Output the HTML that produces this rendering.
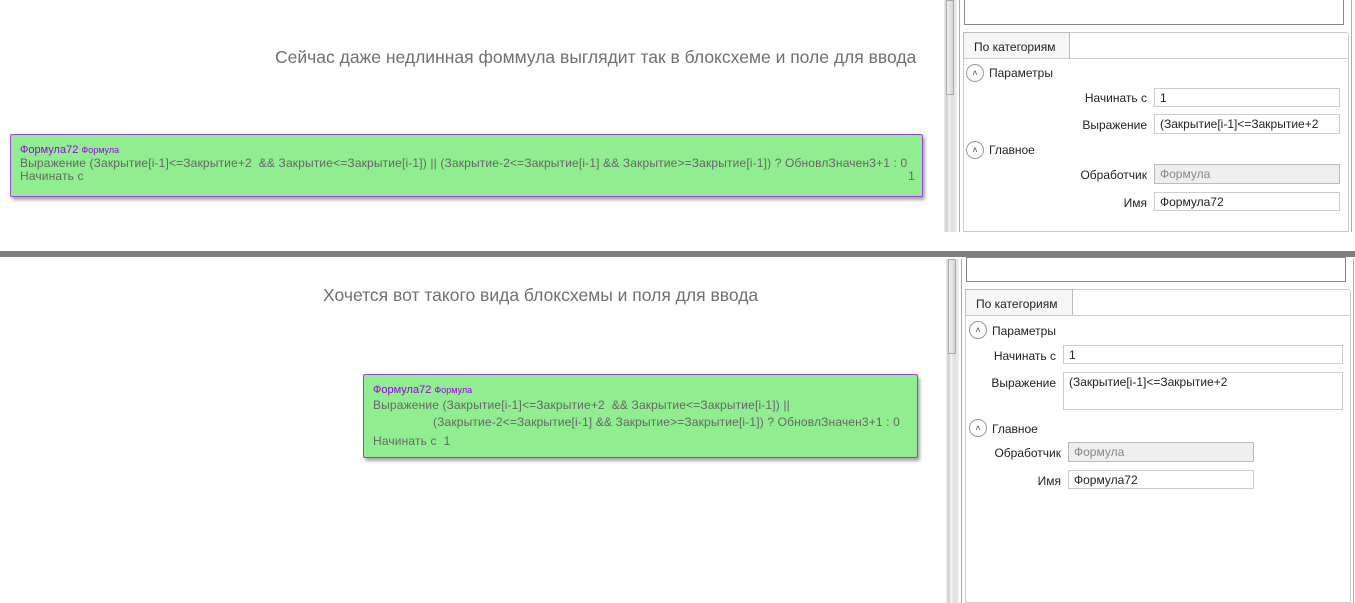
<!DOCTYPE html>
<html><head><meta charset="utf-8"><style>
*{margin:0;padding:0;box-sizing:border-box}
body{width:1355px;height:603px;background:#fff;position:relative;overflow:hidden;font-family:"Liberation Sans","DejaVu Sans",sans-serif;color:#333}
.a{position:absolute}
.h{font-size:17.5px;color:#707070;white-space:nowrap;transform-origin:left top}
.box{background:#90ee90;border:1px solid #a040e0;box-shadow:2px 3px 3px rgba(0,0,0,.35);font-size:12px;letter-spacing:0.15px;color:#666;border-radius:2px;white-space:nowrap}
.t{color:#9a00e8;font-size:11px;letter-spacing:0}
.t small{font-size:9px}
.sb{background:linear-gradient(90deg,#eee,#ccc 20%,#f4f4f4 40%,#ddd 60%,#eee)}
.sbt{border:1px solid #aaa;background:linear-gradient(90deg,#f0f0f0,#d4d4d4)}
.panel{border-left:1px solid #aaa;border-right:1px solid #aaa;background:#fff}
.lb{border:1px solid #888;background:#fff}
.tab{border:1px solid #bbb;border-bottom:none;background:#f6f6f6;font-size:12px;color:#222;padding:7px 0 0 10px}
.cont{border:1px solid #ccc;border-radius:3px 3px 0 0}
.sec{font-size:12px;color:#222}
.ic{width:18px;height:18px;border:1px solid #999;border-radius:50%;background:#fff;font-size:9px;text-align:center;line-height:16px;color:#444}
.lab{font-size:12px;color:#222;text-align:right}
.in{border:1px solid #ccc;background:#fff;font-size:12px;color:#222;padding:2px 0 0 5px;white-space:nowrap;overflow:hidden}
.dis{background:#eee;color:#888;border-color:#bbb}
</style></head><body>

<div class="a h" style="left:275px;top:47px">Сейчас даже недлинная фоммула выглядит так в блоксхеме и поле для ввода</div>

<div class="a box" style="left:10px;top:134px;width:913px;height:63px;padding:9px 0 0 9px;line-height:13px">
<div class="t">Формула72 <small>Формула</small></div>
<div>Выражение (Закрытие[i-1]&lt;=Закрытие+2 &nbsp;&amp;&amp; Закрытие&lt;=Закрытие[i-1]) || (Закрытие-2&lt;=Закрытие[i-1] &amp;&amp; Закрытие&gt;=Закрытие[i-1]) ? ОбновлЗначен3+1 : 0</div>
<div>Начинать с<span style="position:absolute;right:7px">1</span></div>
</div>

<!-- top panel -->
<div class="a sb" style="left:944px;top:0;width:13px;height:232px"></div>
<div class="a sbt" style="left:946px;top:0;width:8px;height:95px"></div>
<div class="a panel" style="left:959px;top:0;width:393px;height:232px"></div>
<div class="a lb" style="left:964px;top:-2px;width:380px;height:27px"></div>
<div class="a cont" style="left:963px;top:32px;width:386px;height:200px"></div>
<div class="a tab" style="left:963px;top:32px;width:107px;height:26px">По категориям</div>
<div class="a" style="left:963px;top:58px;width:386px;height:1px;background:#ccc"></div>
<div class="a ic" style="left:966px;top:64px">&#x2C4;</div>
<div class="a sec" style="left:989px;top:66px">Параметры</div>
<div class="a lab" style="left:1000px;top:91px;width:147px">Начинать с</div>
<div class="a in" style="left:1154px;top:88px;width:186px;height:19px">1</div>
<div class="a lab" style="left:1000px;top:118px;width:147px">Выражение</div>
<div class="a in" style="left:1154px;top:114px;width:186px;height:20px">(Закрытие[i-1]&lt;=Закрытие+2</div>
<div class="a ic" style="left:966px;top:141px">&#x2C4;</div>
<div class="a sec" style="left:989px;top:143px">Главное</div>
<div class="a lab" style="left:1000px;top:168px;width:147px">Обработчик</div>
<div class="a in dis" style="left:1154px;top:164px;width:186px;height:20px">Формула</div>
<div class="a lab" style="left:1000px;top:196px;width:147px">Имя</div>
<div class="a in" style="left:1154px;top:192px;width:186px;height:19px">Формула72</div>

<div class="a" style="left:0;top:251px;width:1355px;height:6px;background:#808080"></div>

<div class="a h" style="left:323px;top:285px">Хочется вот такого вида блоксхемы и поля для ввода</div>

<div class="a box" style="left:363px;top:374px;width:555px;height:84px;padding:9px 0 0 9px">
<div class="t" style="line-height:13px">Формула72 <small>Формула</small></div>
<div style="line-height:17px">Выражение (Закрытие[i-1]&lt;=Закрытие+2 &nbsp;&amp;&amp; Закрытие&lt;=Закрытие[i-1]) ||</div>
<div style="line-height:17px;padding-left:60px">(Закрытие-2&lt;=Закрытие[i-1] &amp;&amp; Закрытие&gt;=Закрытие[i-1]) ? ОбновлЗначен3+1 : 0</div>
<div style="line-height:20px">Начинать с &nbsp;1</div>
</div>

<!-- bottom panel -->
<div class="a sb" style="left:946px;top:259px;width:13px;height:344px"></div>
<div class="a sbt" style="left:948px;top:259px;width:8px;height:95px"></div>
<div class="a panel" style="left:961px;top:259px;width:393px;height:344px"></div>
<div class="a lb" style="left:966px;top:257px;width:380px;height:25px"></div>
<div class="a cont" style="left:965px;top:289px;width:386px;height:314px"></div>
<div class="a tab" style="left:965px;top:289px;width:108px;height:26px">По категориям</div>
<div class="a" style="left:965px;top:315px;width:386px;height:1px;background:#ccc"></div>
<div class="a ic" style="left:969px;top:321px">&#x2C4;</div>
<div class="a sec" style="left:992px;top:324px">Параметры</div>
<div class="a lab" style="left:960px;top:349px;width:96px">Начинать с</div>
<div class="a in" style="left:1063px;top:345px;width:280px;height:19px">1</div>
<div class="a lab" style="left:960px;top:376px;width:96px">Выражение</div>
<div class="a in" style="left:1063px;top:372px;width:280px;height:38px">(Закрытие[i-1]&lt;=Закрытие+2</div>
<div class="a ic" style="left:969px;top:419px">&#x2C4;</div>
<div class="a sec" style="left:992px;top:422px">Главное</div>
<div class="a lab" style="left:960px;top:446px;width:101px">Обработчик</div>
<div class="a in dis" style="left:1068px;top:442px;width:186px;height:20px">Формула</div>
<div class="a lab" style="left:960px;top:474px;width:101px">Имя</div>
<div class="a in" style="left:1068px;top:470px;width:186px;height:19px">Формула72</div>

</body></html>
